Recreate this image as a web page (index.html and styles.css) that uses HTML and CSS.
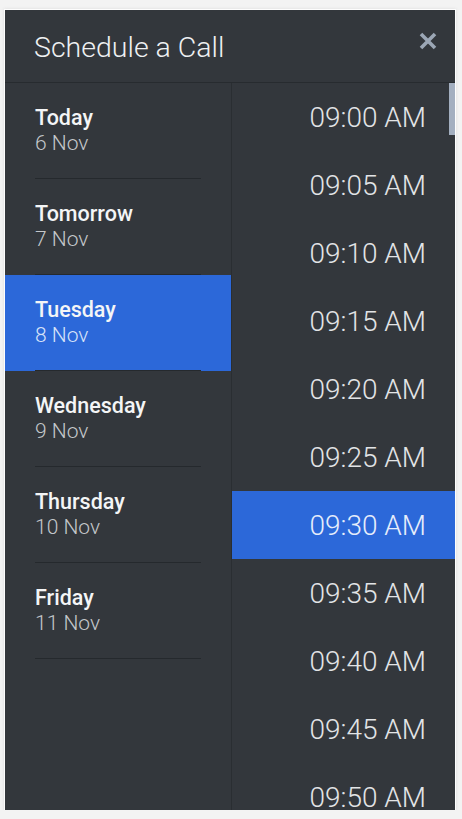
FILE: index.html
```html
<!DOCTYPE html>
<html lang="en">
<head>
  <meta charset="UTF-8">
  <title>Schedule a Call</title>
  <link rel="stylesheet" href="styles.css">
</head>
<body>

  <div class="panel">
    <div class="header">
      <h1>Schedule a Call</h1>
      <button class="close" aria-label="Close">
        <svg width="18" height="18" viewBox="0 0 18 18">
          <path d="M2 2 L16 16 M16 2 L2 16" stroke="#9ba6b5" stroke-width="3.6" stroke-linecap="butt"/>
        </svg>
      </button>
    </div>

    <div class="body">
      <ul class="days">
        <li class="day"><div class="day-inner"><div class="name">Today</div><div class="date">6 Nov</div></div></li>
        <li class="day"><div class="day-inner"><div class="name">Tomorrow</div><div class="date">7 Nov</div></div></li>
        <li class="day active"><div class="day-inner"><div class="name">Tuesday</div><div class="date">8 Nov</div></div></li>
        <li class="day"><div class="day-inner"><div class="name">Wednesday</div><div class="date">9 Nov</div></div></li>
        <li class="day"><div class="day-inner"><div class="name">Thursday</div><div class="date">10 Nov</div></div></li>
        <li class="day"><div class="day-inner"><div class="name">Friday</div><div class="date">11 Nov</div></div></li>
      </ul>

      <div class="times-wrap">
        <ul class="times">
          <li>09:00 AM</li>
          <li>09:05 AM</li>
          <li>09:10 AM</li>
          <li>09:15 AM</li>
          <li>09:20 AM</li>
          <li>09:25 AM</li>
          <li class="active">09:30 AM</li>
          <li>09:35 AM</li>
          <li>09:40 AM</li>
          <li>09:45 AM</li>
          <li>09:50 AM</li>
        </ul>
        <div class="thumb"></div>
      </div>
    </div>
  </div>

</body>
</html>
```

FILE: styles.css
```css
body {
  background-color: #f3f3f3;
  font-family: Roboto, 'Liberation Sans', sans-serif;
  margin: 0;
  padding: 10px 0 0 5px;
}

.panel {
  width: 450px;
  height: 800px;
  background-color: #33373c;
  box-shadow: 0 0 0 1px #fdfdfd, 0 0 3px 1px #dcdcdc;
  display: flex;
  flex-direction: column;
  overflow: hidden;
}

.header {
  height: 72px;
  flex-shrink: 0;
  display: flex;
  align-items: center;
  justify-content: space-between;
  padding: 0 18px 0 29px;
  border-bottom: 1px solid #272b2f;
}

h1 {
  margin: 2px 0 0 0;
  font-size: 28.5px;
  font-weight: 300;
  color: #eef0f2;
}

.close {
  background: none;
  border: none;
  padding: 0;
  margin-top: -10px;
  cursor: pointer;
  display: flex;
}

.body {
  flex: 1;
  display: flex;
  min-height: 0;
}

.days {
  list-style: none;
  margin: 0;
  padding: 0;
  width: 226px;
  flex-shrink: 0;
  border-right: 1px solid #2a2e32;
}

.day {
  padding: 0 30px;
  cursor: pointer;
}

.day-inner {
  padding: 23px 0 23px;
  border-bottom: 1px solid #25292d;
}

.day .name {
  font-size: 21.5px;
  line-height: 24px;
  font-weight: 500;
  color: #f4f5f6;
}

.day .date {
  margin-top: 1px;
  font-size: 21px;
  line-height: 24px;
  font-weight: 300;
  color: #c4c7cb;
}

.day.active {
  background-color: #2c68d9;
}

.day.active .date {
  color: #d6e2f8;
}

.times-wrap {
  flex: 1;
  position: relative;
  overflow: hidden;
}

.times {
  list-style: none;
  margin: 0;
  padding: 0;
}

.times li {
  height: 68px;
  display: flex;
  align-items: center;
  justify-content: flex-end;
  padding-right: 29px;
  font-size: 28px;
  font-weight: 300;
  color: #e2e4e6;
  cursor: pointer;
}

.times li.active {
  background-color: #2c68d9;
  color: #e6edfb;
}

.thumb {
  position: absolute;
  top: 0;
  right: 0;
  width: 6px;
  height: 52px;
  background-color: #a3afc0;
}
```
